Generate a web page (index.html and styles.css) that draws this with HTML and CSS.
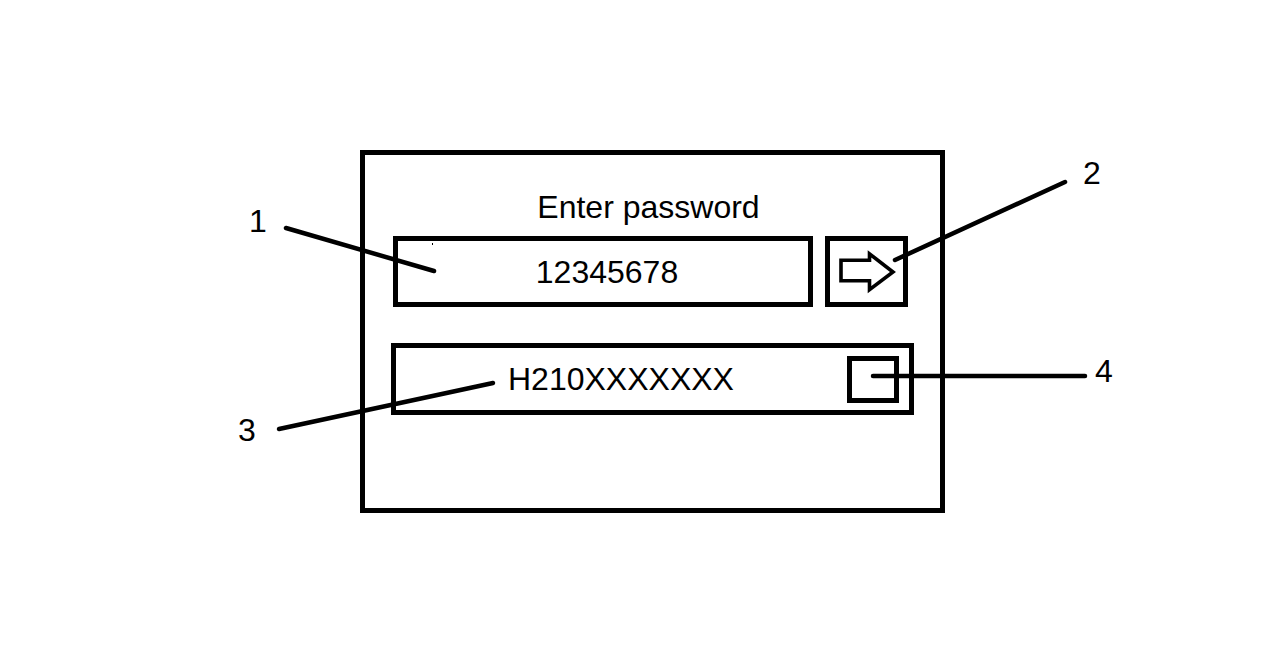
FILE: index.html
```html
<!DOCTYPE html>
<html lang="en">
<head>
<meta charset="utf-8">
<title>Enter password</title>
<link rel="stylesheet" href="styles.css">
</head>
<body>
  <div class="panel">
    <div class="title">Enter password</div>
    <div class="row row-pass">
      <div class="field field-pass"><span class="value">12345678</span></div>
      <button class="go" type="button" aria-label="Submit">
        <svg class="go-icon" width="73" height="60" viewBox="0 0 73 60">
          <polygon points="11,19.3 39.5,19.3 39.5,12.8 63,31 39.5,48.7 39.5,39.7 11,39.7" fill="none" stroke="#000" stroke-width="3.6" stroke-linejoin="miter"/>
        </svg>
      </button>
    </div>
    <div class="row row-serial">
      <div class="field field-serial">
        <span class="value">H210XXXXXXX</span>
        <span class="check"></span>
      </div>
    </div>
  </div>

  <svg class="callouts" width="1287" height="666" viewBox="0 0 1287 666">
    <g stroke="#000" stroke-width="4.5" stroke-linecap="round">
      <line x1="286" y1="228" x2="434" y2="271"/>
      <line x1="1065" y1="182" x2="895" y2="260"/>
      <line x1="279" y1="429" x2="493" y2="383"/>
      <line x1="873" y1="376" x2="1085" y2="376"/>
    </g>
    <rect x="432" y="243" width="1" height="2" fill="#000"/>
    <g class="nums">
      <text x="249" y="232">1</text>
      <text x="1083" y="184">2</text>
      <text x="238" y="441">3</text>
      <text x="1095" y="382">4</text>
    </g>
  </svg>
</body>
</html>
```

FILE: styles.css
```css
html, body {
  margin: 0;
  padding: 0;
  background: #fff;
}

body {
  position: relative;
  width: 1287px;
  height: 666px;
  overflow: hidden;
  font-family: "Liberation Sans", Arial, sans-serif;
  color: #000;
}

.panel {
  box-sizing: border-box;
  width: 585px;
  height: 363px;
  margin: 150px 0 0 360px;
  border: 5px solid #000;
  padding-top: 36px;
}

.title {
  font-size: 32px;
  line-height: 32px;
  text-align: center;
  padding-right: 8px;
  margin-bottom: 13px;
}

.row {
  display: flex;
  align-items: stretch;
}

.row-pass {
  margin-left: 28px;
  gap: 12px;
  height: 71px;
}

.row-serial {
  margin-left: 26px;
  margin-top: 36px;
  height: 72px;
}

.field {
  box-sizing: border-box;
  border: 5px solid #000;
  display: flex;
  align-items: center;
  font-size: 32px;
  line-height: 32px;
}

.field-pass {
  width: 420px;
  justify-content: center;
  padding-left: 8px;
}

.field-serial {
  width: 523px;
  padding-left: 112px;
  padding-right: 10px;
  justify-content: space-between;
}

.go {
  box-sizing: border-box;
  width: 83px;
  height: 71px;
  border: 5px solid #000;
  background: #fff;
  padding: 0;
  margin: 0;
  display: flex;
  align-items: flex-start;
  justify-content: flex-start;
}

.go-icon {
  display: block;
}

.check {
  box-sizing: border-box;
  width: 52px;
  height: 47px;
  border: 5px solid #000;
}

.callouts {
  position: absolute;
  left: 0;
  top: 0;
  pointer-events: none;
}

.nums text {
  font-family: "Liberation Sans", Arial, sans-serif;
  font-size: 32px;
  fill: #000;
}
```
